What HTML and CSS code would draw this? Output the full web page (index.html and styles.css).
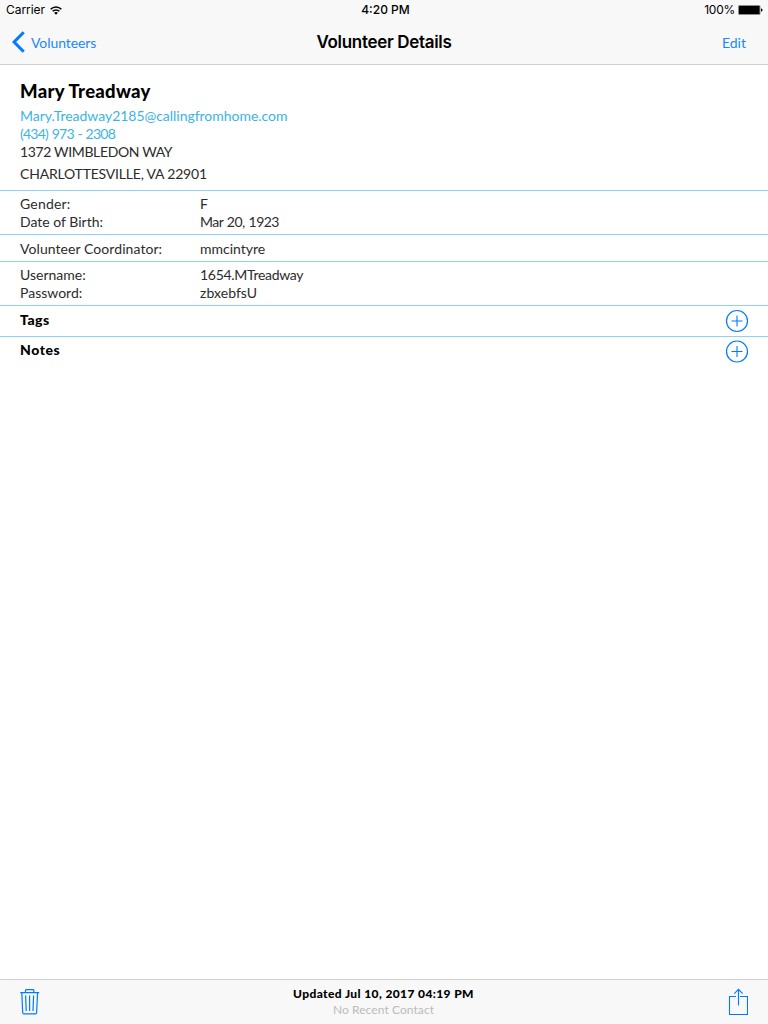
FILE: index.html
```
<!DOCTYPE html>
<html lang="en">
<head>
<meta charset="utf-8">
<title>Volunteer Details</title>
<link rel="stylesheet" href="styles.css">
</head>
<body>
<div class="app">
  <header class="top">
    <div class="status">
      <div class="carrier"><span>Carrier</span>
        <svg class="wifi" width="12" height="9" viewBox="0 0 12 9" fill="none" stroke="#000" stroke-width="1.5"><path d="M.6 3.2C3.6.1 8.4.1 11.4 3.2M2.6 5.3c1.9-1.9 4.9-1.9 6.8 0"/><path d="M4.1 6.7c1-1 2.8-1 3.8 0L6 8.7z" fill="#000" stroke="none"/></svg>
      </div>
      <span class="clock">4:20 PM</span>
      <div class="power"><span class="percent">100%</span>
        <svg width="25" height="10" viewBox="0 0 25 10"><rect width="22.5" height="10" rx="1.5" fill="#8b8b8b"/><rect x="1" y="1" width="20.5" height="8" rx=".5"/><path d="M23 3.2q1.6.6 1.6 1.8T23 6.8z"/></svg>
      </div>
    </div>
    <nav class="nav">
      <a class="back"><svg width="13" height="22" viewBox="0 0 13 22" fill="none" stroke="#007aff" stroke-width="3"><path d="M11.7 1.3 2.1 11l9.6 9.7"/></svg><span>Volunteers</span></a>
      <h1 class="title">Volunteer Details</h1>
      <a class="edit">Edit</a>
    </nav>
  </header>
  <main class="content">
    <section class="person">
      <h2 class="name">Mary Treadway</h2>
      <div class="row link email">Mary.Treadway2185@callingfromhome.com</div>
      <div class="row link phone">(434) 973 - 2308</div>
      <div class="row street">1372 WIMBLEDON WAY</div>
      <div class="row city">CHARLOTTESVILLE, VA 22901</div>
    </section>
    <section class="group">
      <div class="row"><span class="label gender">Gender:</span><span>F</span></div>
      <div class="row"><span class="label">Date of Birth:</span><span class="date">Mar 20, 1923</span></div>
    </section>
    <section class="group coordinator">
      <div class="row"><span class="label coord">Volunteer Coordinator:</span><span>mmcintyre</span></div>
    </section>
    <section class="group">
      <div class="row"><span class="label">Username:</span><span class="login">1654.MTreadway</span></div>
      <div class="row"><span class="label">Password:</span><span class="secret">zbxebfsU</span></div>
    </section>
    <section class="add-row tags"><h3>Tags</h3>
      <svg class="plus" width="24" height="24" viewBox="0 0 24 24" fill="none" stroke="#007aff"><circle cx="12" cy="12" r="10.5" stroke-width="1.2"/><path d="M6.5 12h11M12 6.5v11" stroke-width="1.1"/></svg></section>
    <section class="add-row notes"><h3>Notes</h3>
      <svg class="plus" width="24" height="24" viewBox="0 0 24 24" fill="none" stroke="#007aff"><circle cx="12" cy="11.5" r="10.5" stroke-width="1.2"/><path d="M6.5 11.5h11M12 6v11" stroke-width="1.1"/></svg></section>
  </main>
  <footer class="bottom">
    <svg class="trash" width="20" height="26" viewBox="0 0 20 26" fill="none" stroke="#007aff" stroke-width="1.2"><path d="M.3 3.6h18.9M5.5 3.4V1.5Q5.5.7 6.3.7h6.7q.8 0 .8.8v1.9M1.8 3.8l.9 20q.1 1.1 1.2 1.1h11.5q1.1 0 1.2-1.1l1-20M5.6 6.5l.6 15.4M9.6 6.5v15.4M13.6 6.5l-.6 15.4"/></svg>
    <div class="summary"><div class="updated">Updated Jul 10, 2017 04:19 PM</div><div class="recent">No Recent Contact</div></div>
    <svg class="share" width="20" height="28" viewBox="0 0 20 28" fill="none" stroke="#007aff" stroke-width="1.1"><path d="M8 8.5H1.5v18h18v-18H12M10.5 17.5V1.5M6.3 5.6l4.2-4.2 4.2 4.2"/></svg>
  </footer>
</div>
</body>
</html>
```
FILE: styles.css
```
*{box-sizing:border-box}
body{margin:0;background:#fff;color:#000;font-family:Lato,sans-serif;font-size:14px}
h1,h2,h3{margin:0}
svg{display:block;flex:none}
.app{width:768px;height:1024px;display:flex;flex-direction:column}
.top{height:65px;background:#f8f8f8;border-bottom:1px solid #cfcfcf}
.status{height:20px;display:grid;grid-template-columns:1fr auto 1fr;align-items:center;font:12px/20px Inter,sans-serif;padding:0 5px 0 6px}
.carrier,.power{display:flex;align-items:center;gap:5px}
.carrier{letter-spacing:-.05px}
.power{justify-content:flex-end;gap:3px}
.percent{letter-spacing:-.25px}
.clock{font-weight:500;padding-left:2px}
.nav{height:44px;display:grid;grid-template-columns:1fr auto 1fr;align-items:center;padding:0 12px;color:#1a87ff}
.back{display:flex;align-items:center;gap:6px;letter-spacing:-.08px}
.title{font:600 17px/22px Inter,sans-serif;letter-spacing:-.32px;color:#000}
.edit{text-align:right;padding-right:10px}
.content{flex:1}
.person{height:126px;padding:14px 20px 0;border-bottom:1px solid #8ed3f4}
.name{font-size:18.5px;line-height:24px;font-weight:900;letter-spacing:.28px;height:28px}
.row{display:flex;height:18px;line-height:18px;color:#2c2c2c}
.link{color:#3cb3e7}
.email{letter-spacing:-.03px}
.phone{letter-spacing:-.75px;word-spacing:.8px}
.street{letter-spacing:-.36px}
.city{margin-top:4px;letter-spacing:-.2px}
.group{padding:4px 20px 3px;border-bottom:1px solid #8ed3f4}
.coordinator{padding-top:5px}
.label{width:180px;flex:none}
.gender{letter-spacing:.2px}
.coord{letter-spacing:.07px}
.date{letter-spacing:-.52px;word-spacing:.8px}
.login{letter-spacing:-.3px}
.secret{letter-spacing:.05px}
.add-row{height:30px;display:flex;justify-content:space-between;align-items:center;padding:0 19px 0 20px}
.add-row h3{font-size:14px;line-height:20px;font-weight:900;letter-spacing:.45px;padding-bottom:2px}
.tags{height:31px;border-bottom:1px solid #8ed3f4}
.add-row.notes h3{padding-bottom:4px;letter-spacing:.55px}
.bottom{height:45px;background:#f8f8f8;border-top:1px solid #cfcfcf;display:flex;justify-content:space-between;align-items:center;padding:0 20px}
.summary{text-align:center;margin-right:1px}
.updated{font-size:12px;line-height:16px;font-weight:900;letter-spacing:.39px}
.recent{font-size:12px;line-height:16px;letter-spacing:.08px;color:#bbb}
```
